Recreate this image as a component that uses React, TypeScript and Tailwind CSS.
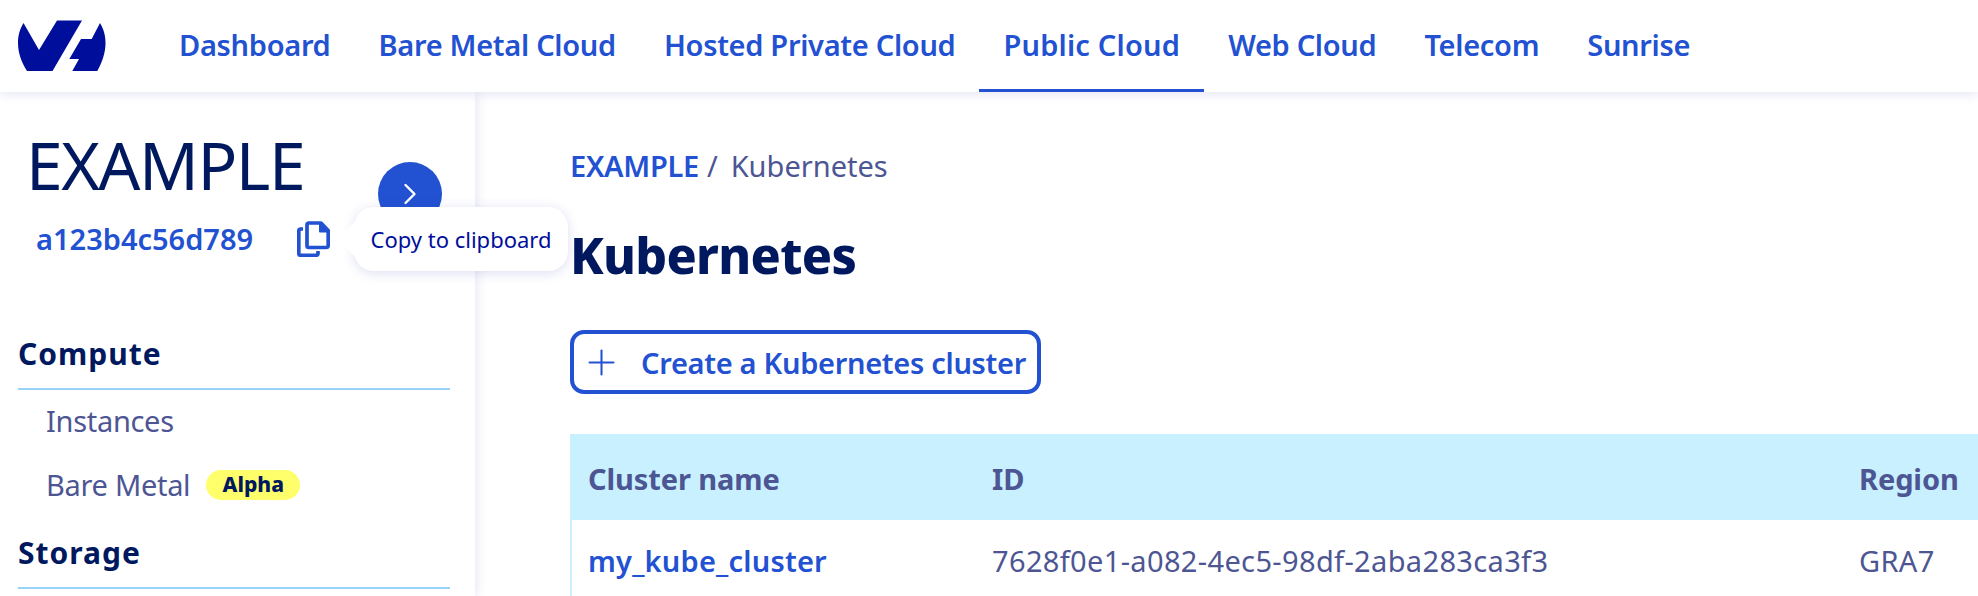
import { ChevronRight, Plus } from "lucide-react";

const navItems = ["Dashboard", "Bare Metal Cloud", "Hosted Private Cloud", "Public Cloud", "Web Cloud", "Telecom", "Sunrise"];

function Logo() {
    return (
        <svg viewBox="18 20 88 52" className="w-[88px] h-[52px] shrink-0" fill="#000e9c">
            <path d="M23.5 23 L39 50 L57 20.5 L82 20.5 L52.5 71 L27 71 C21 62 18 52 18 43 C18 35 20 29 23.5 23 Z" />
            <path d="M100 23 C103.500 29 105.500 35 105.500 43 C105.500 52 102.500 62 97.300 71 L72.300 71 L79 59 L69.300 59 L81 39 L91.700 39 Z" />
        </svg>
    );
}

function CopyIcon() {
    return (
        <svg viewBox="0 0 33 36" className="w-[33px] h-[36px]" fill="none" stroke="#2251d1" strokeWidth="3.700" strokeLinejoin="round">
            <path d="M12 2 H24 L31.200 9.500 V24.500 A2 2 0 0 1 29.200 26.500 H12 A2 2 0 0 1 10 24.500 V4 A2 2 0 0 1 12 2 Z" />
            <path d="M23 2 V10.500 H31.200" fill="#2251d1" strokeWidth="2" />
            <path d="M6 8 H3.800 A2 2 0 0 0 1.800 10 V32.300 A2 2 0 0 0 3.800 34.300 H19 A2 2 0 0 0 21 32.300 V30" />
        </svg>
    );
}

function SectionTitle({ title }: { title: string }) {
    return (
        <h3 className="text-[30px] leading-[40px] font-bold tracking-[1px] text-[#00185e] border-b-2 border-[#98d3f8] pb-[14px] ml-[18px] mr-[25px]">{title}</h3>
    );
}

export default function App() {
    return (
        <div className="w-[1978px] h-[596px] overflow-hidden bg-white relative font-['Noto_Sans',sans-serif]">
            {/* Top nav */}
            <header className="h-[92px] flex items-center relative z-20 bg-white shadow-[0_2px_10px_rgba(60,70,180,0.14)] pl-[18px]">
                <Logo />
                <nav className="flex ml-[49px] h-full">
                    {navItems.map(item => (
                        <a
                            key={item}
                            className={
                                item === "Public Cloud"
                                    ? "flex items-center h-full px-[24px] text-[29px] font-semibold tracking-[0.2px] text-[#2251d1] border-b-[3px] border-[#2251d1]"
                                    : "flex items-center h-full px-[24px] text-[29px] font-semibold tracking-[-0.3px] text-[#2251d1] border-b-[3px] border-transparent"
                            }
                        >
                            {item}
                        </a>
                    ))}
                </nav>
            </header>

            <div className="flex h-[504px]">
                {/* Sidebar */}
                <aside className="w-[475px] shrink-0 relative z-10 bg-white shadow-[2px_0_10px_rgba(60,70,180,0.12)] pt-[32px]">
                    <div className="pl-[26px] text-[66px] leading-[80px] text-[#00185e] font-normal tracking-[-1.500px]">EXAMPLE</div>
                    <div className="flex items-center mt-[10px] pl-[36px] h-[50px]">
                        <span className="w-[261px] text-[29px] font-semibold text-[#2251d1]">a123b4c56d789</span>
                        <CopyIcon />
                    </div>
                    <div className="mt-[70px]">
                        <SectionTitle title="Compute" />
                        <div className="pl-[46px] h-[64px] flex items-center text-[29px] tracking-[-0.3px] text-[#4d5693] -mt-[1px]">Instances</div>
                        <div className="pl-[46px] h-[64px] flex items-center text-[29px] tracking-[-0.3px] text-[#4d5693]">
                            Bare Metal
                            <span className="ml-[16px] w-[94px] h-[30px] rounded-full bg-[#ffff6b] text-[#00185e] text-[21px] tracking-normal font-extrabold flex items-center justify-center">Alpha</span>
                        </div>
                        <div className="mt-[16px]">
                            <SectionTitle title="Storage" />
                        </div>
                    </div>

                    {/* Toggle button */}
                    <div className="absolute left-[378px] top-[70px] w-[64px] h-[64px] rounded-full bg-[#2251d1] flex items-center justify-center">
                        <ChevronRight size={36} strokeWidth={1.6} className="text-white" />
                    </div>
                </aside>

                {/* Main */}
                <main className="flex-1 pt-[56px] pl-[95px]">
                    <div className="flex items-center text-[29px] leading-[36px] text-[#4d5693]">
                        <span className="font-semibold text-[#2251d1] tracking-[-0.3px]">EXAMPLE</span>
                        <span className="ml-[8px]">/</span>
                        <span className="ml-[13px]">Kubernetes</span>
                    </div>
                    <h1 className="text-[50px] leading-[60px] font-extrabold tracking-[-0.7px] text-[#00185e] mt-[41px]">Kubernetes</h1>
                    <button className="mt-[45px] w-[471px] h-[64px] rounded-[14px] border-[4px] border-[#2251d1] flex items-center text-[#2251d1] pl-[7px]">
                        <Plus size={41} strokeWidth={1.2} className="shrink-0" />
                        <span className="ml-[19px] pt-[2px] text-[29px] font-semibold tracking-[-0.3px]">Create a Kubernetes cluster</span>
                    </button>
                    <div className="mt-[40px] border-l-2 border-[#c8f0ff]">
                        <div className="-ml-[2px] h-[86px] pt-[3px] bg-[#c8f0ff] flex items-center text-[29px] font-bold tracking-[-0.1px] text-[#4d5693]">
                            <span className="pl-[18px] w-[422px]">Cluster name</span>
                            <span className="w-[867px]">ID</span>
                            <span>Region</span>
                        </div>
                        <div className="-ml-[2px] h-[82px] flex items-center text-[29px] tracking-[0.35px] text-[#4d5693]">
                            <span className="pl-[18px] w-[422px] font-semibold text-[#2251d1] tracking-[0.2px]">my_kube_cluster</span>
                            <span className="w-[867px]">7628f0e1-a082-4ec5-98df-2aba283ca3f3</span>
                            <span>GRA7</span>
                        </div>
                    </div>
                </main>
            </div>

            {/* Tooltip */}
            <div className="absolute left-[354px] top-[207px] z-30 w-[214px] h-[64px] rounded-[20px] bg-white shadow-[0_2px_12px_rgba(60,70,180,0.18)] flex items-center justify-center text-[22px] text-[#000e9c]">
                <span className="absolute -left-[11px] top-[18px] w-[28px] h-[28px] rotate-45 bg-white" />
                <span className="relative whitespace-nowrap">Copy to clipboard</span>
            </div>
        </div>
    );
}
